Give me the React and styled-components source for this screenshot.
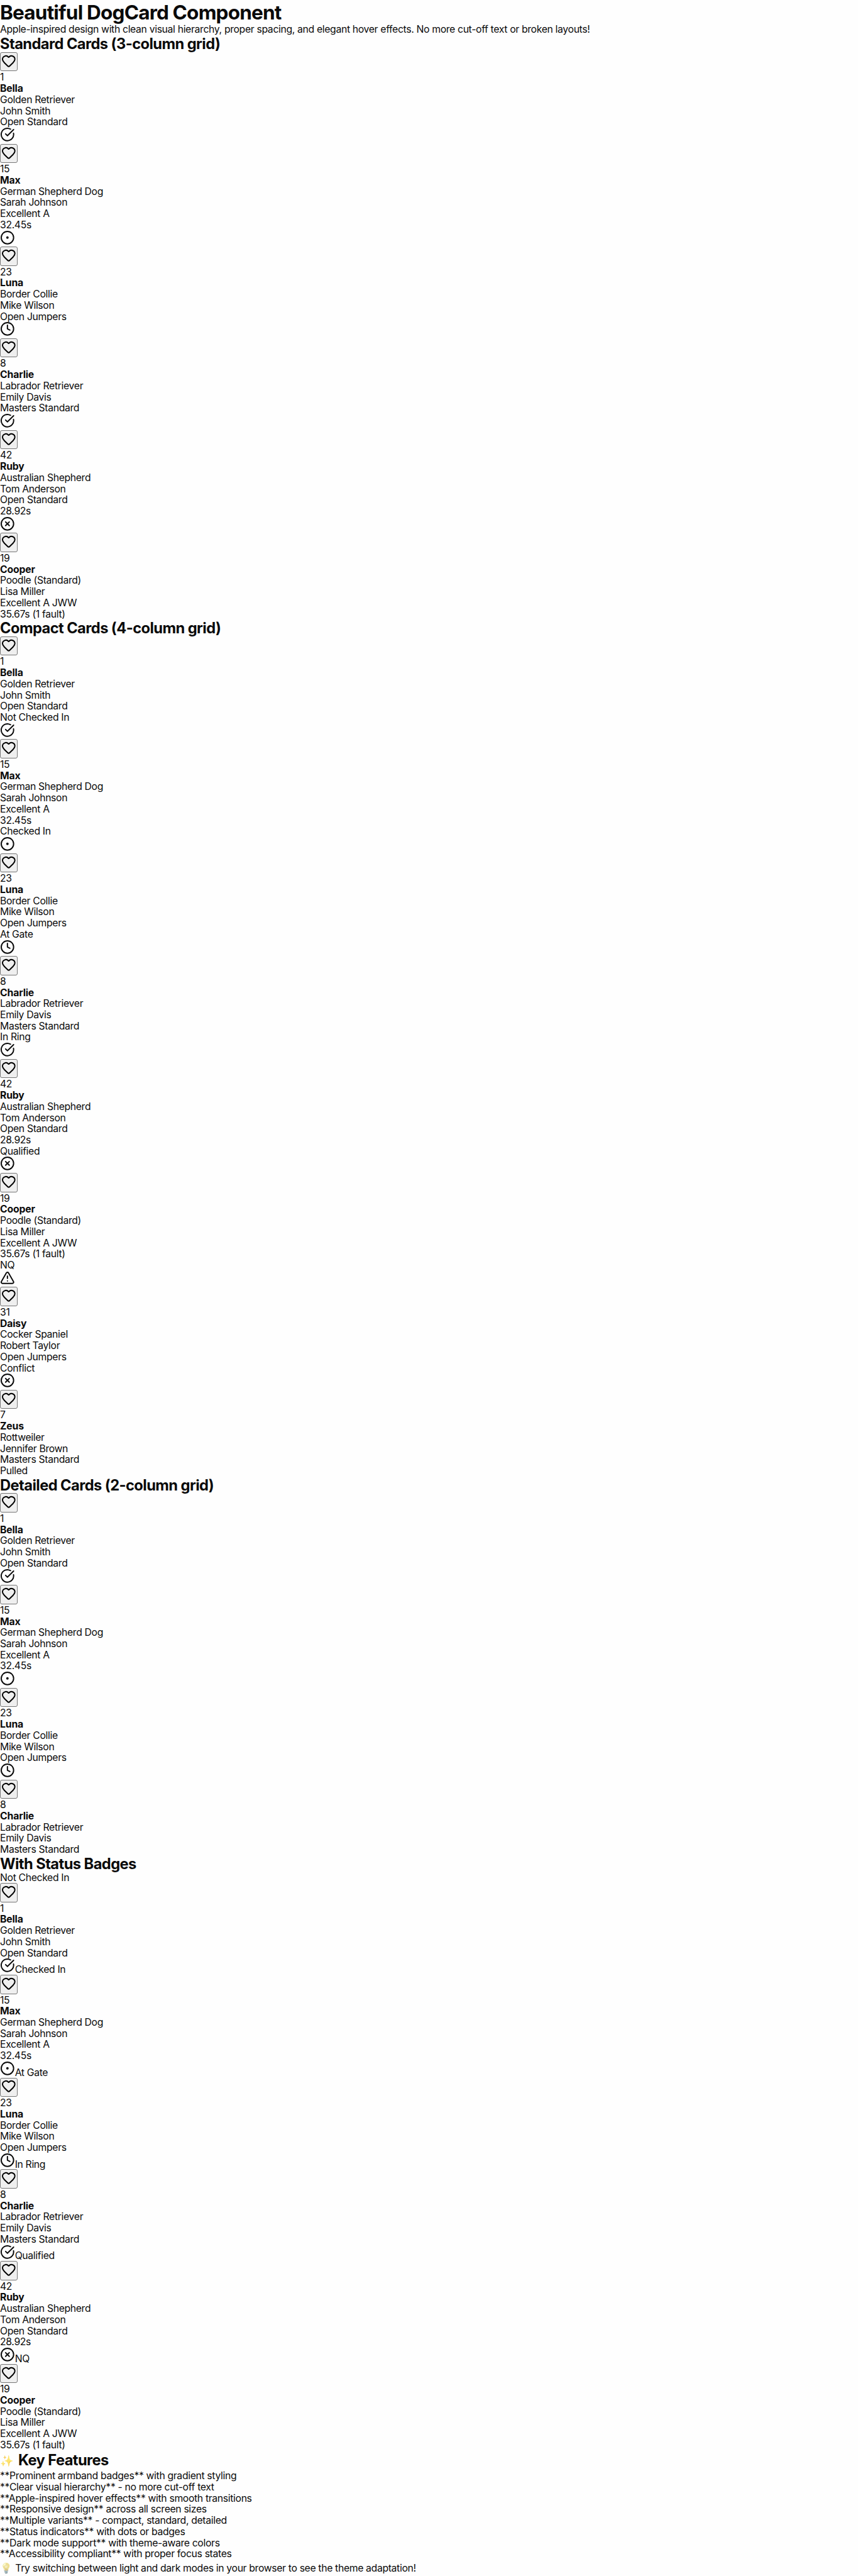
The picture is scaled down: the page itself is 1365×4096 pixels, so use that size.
import React from "react";
import styled, { createGlobalStyle } from "styled-components";
import { Heart, CircleCheckBig, CircleDot, Clock, CircleX, TriangleAlert } from "lucide-react";

const u = (n) => `${n * 0.9855}px`;

const GlobalStyle = createGlobalStyle`
  * { box-sizing: border-box; margin: 0; padding: 0; }
  body {
    background: #fefefe;
    color: #0a0a0a;
    font-family: Inter, "Liberation Sans", sans-serif;
    font-size: ${u(16)};
    line-height: ${u(20)};
    letter-spacing: ${u(-0.345)};
    -webkit-font-smoothing: antialiased;
  }
`;

const Page = styled.main`
  display: flex;
  flex-direction: column;
`;

const Title = styled.h1`
  height: ${u(38)};
  padding-top: ${u(1)};
  font-size: ${u(32)};
  line-height: ${u(38)};
  font-weight: 700;
  letter-spacing: ${u(-0.817)};
`;

const Section = styled.section`
  display: flex;
  flex-direction: column;
`;

const SectionTitle = styled.h2`
  display: flex;
  align-items: flex-start;
  height: ${(p) => u(p.$height || 28)};
  padding-top: ${(p) => u(p.$drop || 1)};
  font-size: ${u(24)};
  line-height: ${u(28)};
  font-weight: 700;
  letter-spacing: ${u(-0.56)};
  white-space: pre;
`;

const Card = styled.article`
  display: flex;
  flex-direction: column;
  align-items: flex-start;
`;

const StatusRow = styled.div`
  display: flex;
  align-items: flex-start;
  height: ${(p) => u(p.$tall ? 27 : 18)};
`;

const StatusLabel = styled.span`
  padding-top: ${(p) => u(p.$offset ? 9 : 0)};
`;

const FavoriteButton = styled.button`
  display: flex;
  align-items: flex-start;
  justify-content: center;
  width: ${u(28)};
  height: ${u(31)};
  padding-top: ${u(1)};
  border: 1px solid #767676;
  border-radius: 3px;
  background: #efefef;
  color: #000;
`;

const Line = styled.p`
  height: ${u(18)};
  white-space: nowrap;
`;

const Name = styled.h3`
  height: ${u(18)};
  font-size: ${u(16)};
  font-weight: 700;
  letter-spacing: ${u(-0.16)};
`;

const Features = styled.ul`
  list-style: none;
`;

const Tip = styled.p`
  display: flex;
  align-items: flex-start;
  height: ${u(26)};
  padding-top: ${u(5)};
  white-space: pre;
`;

const Emoji = styled.span`
  width: ${(p) => u(p.$width)};
  padding-left: ${u(0.3)};
  margin-top: ${(p) => u(p.$drop || 0)};
  font-size: ${(p) => u(p.$size)};
  font-weight: 400;
  letter-spacing: 0;
  opacity: 0.7;
  filter: saturate(${(p) => p.$saturation || 1});
`;

const ICON = 24 * 0.9855;
const STATUS = {
  none: { label: "Not Checked In" },
  checked: { label: "Checked In", icon: CircleCheckBig },
  gate: { label: "At Gate", icon: CircleDot },
  ring: { label: "In Ring", icon: Clock },
  qualified: { label: "Qualified", icon: CircleCheckBig },
  nq: { label: "NQ", icon: CircleX },
  conflict: { label: "Conflict", icon: TriangleAlert },
  pulled: { label: "Pulled", icon: CircleX },
};

const DOGS = [
  { armband: 1, name: "Bella", breed: "Golden Retriever", handler: "John Smith", cls: "Open Standard", status: "none" },
  { armband: 15, name: "Max", breed: "German Shepherd Dog", handler: "Sarah Johnson", cls: "Excellent A", result: "32.45s", status: "checked" },
  { armband: 23, name: "Luna", breed: "Border Collie", handler: "Mike Wilson", cls: "Open Jumpers", status: "gate" },
  { armband: 8, name: "Charlie", breed: "Labrador Retriever", handler: "Emily Davis", cls: "Masters Standard", status: "ring" },
  { armband: 42, name: "Ruby", breed: "Australian Shepherd", handler: "Tom Anderson", cls: "Open Standard", result: "28.92s", status: "qualified" },
  { armband: 19, name: "Cooper", breed: "Poodle (Standard)", handler: "Lisa Miller", cls: "Excellent A JWW", result: "35.67s (1 fault)", status: "nq" },
  { armband: 31, name: "Daisy", breed: "Cocker Spaniel", handler: "Robert Taylor", cls: "Open Jumpers", status: "conflict" },
  { armband: 7, name: "Zeus", breed: "Rottweiler", handler: "Jennifer Brown", cls: "Masters Standard", status: "pulled" },
];

const FEATURES = [
  "**Prominent armband badges** with gradient styling",
  "**Clear visual hierarchy** - no more cut-off text",
  "**Apple-inspired hover effects** with smooth transitions",
  "**Responsive design** across all screen sizes",
  "**Multiple variants** - compact, standard, detailed",
  "**Status indicators** with dots or badges",
  "**Dark mode support** with theme-aware colors",
  "**Accessibility compliant** with proper focus states",
];

function DogCard({ dog, compact, badge }) {
  const { icon: Icon, label } = STATUS[dog.status];
  return (
    <Card>
      {(Icon || badge) && (
        <StatusRow $tall={!!Icon}>
          {Icon && <Icon size={ICON} />}
          {badge && <StatusLabel $offset={!!Icon}>{label}</StatusLabel>}
        </StatusRow>
      )}
      <FavoriteButton aria-label="Favorite"><Heart size={ICON} /></FavoriteButton>
      <Line>{dog.armband}</Line>
      <Name>{dog.name}</Name>
      <Line>{dog.breed}</Line>
      <Line>{dog.handler}</Line>
      <Line>{dog.cls}</Line>
      {dog.result && <Line>{dog.result}</Line>}
      {compact && <Line>{label}</Line>}
    </Card>
  );
}

function CardSection({ title, count, ...options }) {
  return (
    <Section>
      <SectionTitle>{title}</SectionTitle>
      {DOGS.slice(0, count).map((dog) => <DogCard key={dog.armband} dog={dog} {...options} />)}
    </Section>
  );
}

export default function App() {
  return (
    <Page>
      <GlobalStyle />
      <Title>Beautiful DogCard Component</Title>
      <Line>Apple-inspired design with clean visual hierarchy, proper spacing, and elegant hover effects. No more cut-off text or broken layouts!</Line>
      <CardSection title="Standard Cards (3-column grid)" count={6} />
      <CardSection title="Compact Cards (4-column grid)" count={8} compact />
      <CardSection title="Detailed Cards (2-column grid)" count={4} />
      <CardSection title="With Status Badges" count={6} badge />
      <Section>
        <SectionTitle $height={32} $drop={2}>
          <Emoji $width={24.2} $size={17.5} $drop={1}>✨</Emoji> Key Features
        </SectionTitle>
        <Features>{FEATURES.map((f) => <Line as="li" key={f}>{f}</Line>)}</Features>
        <Tip><Emoji $width={20.5} $size={16} $saturation={0.5}>💡</Emoji> Try switching between light and dark modes in your browser to see the theme adaptation!</Tip>
      </Section>
    </Page>
  );
}
